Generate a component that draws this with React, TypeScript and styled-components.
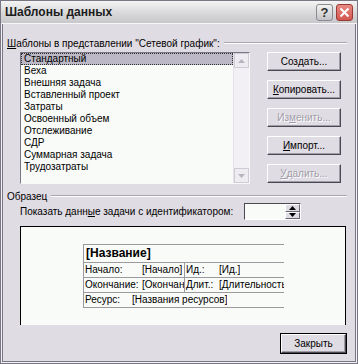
import React from "react";
import styled, { createGlobalStyle, css } from "styled-components";

const Global = createGlobalStyle`
  html, body { margin: 0; padding: 0; background: #e0dce3; }
  body { font-family: "Liberation Sans", Arial, sans-serif; font-size: 10px; color: #000; }
`;

const Window = styled.div`
  width: 358px;
  height: 364px;
  box-sizing: border-box;
  background: #e0dce3;
  border: 1px solid #7a7784;
  box-shadow: inset 0 0 0 1px #f2f0f4, inset 0 0 0 2px #7a7784;
  display: flex;
  flex-direction: column;
  overflow: hidden;
`;

const TitleBar = styled.div`
  height: 22px;
  display: flex;
  align-items: center;
  padding: 0 4px 0 4px;
  background: linear-gradient(#f4f4f4, #d6d6d8 60%, #c8c8cc);
  border-bottom: 1px solid #f6f6f6;
`;

const Title = styled.div`
  flex: 1;
  font-size: 12px;
  font-weight: bold;
  color: #1c1c1c;
`;

const CaptionButton = styled.div<{ $close?: boolean }>`
  width: 17px;
  height: 17px;
  margin-left: 3px;
  border-radius: 3px;
  box-sizing: border-box;
  display: flex;
  align-items: center;
  justify-content: center;
  font-weight: bold;
  font-size: 13px;
  ${(p) =>
    p.$close
      ? css`
          background: linear-gradient(#e88a84, #d2574f);
          border: 1px solid #9a3a36;
          color: #fff;
        `
      : css`
          background: linear-gradient(#f2f2f2, #c4c4c8);
          border: 1px solid #8a8a90;
          color: #303030;
        `}
`;

const Body = styled.div`
  flex: 1;
  display: flex;
  flex-direction: column;
  padding: 12px 10px 0 6px;
`;

const GroupHeader = styled.div<{ $gap?: number }>`
  display: flex;
  align-items: center;
  height: 14px;
  margin-top: ${(p) => p.$gap ?? 0}px;
`;

const GroupLabel = styled.span`
  padding-right: 4px;
  white-space: nowrap;
`;

const GroupLine = styled.div`
  flex: 1;
  height: 0;
  border-top: 1px solid #a8a4b0;
  border-bottom: 1px solid #ffffff;
`;

const U = styled.span`
  text-decoration: underline;
`;

const TemplatesRow = styled.div`
  display: flex;
  margin: 2px 0 0 13px;
  gap: 17px;
`;

const ListBox = styled.div`
  width: 230px;
  height: 132px;
  box-sizing: border-box;
  background: #f8fbf8;
  border: 1px solid #7a7784;
  border-right-color: #f8f8f8;
  border-bottom-color: #f8f8f8;
  display: flex;
`;

const Items = styled.div`
  flex: 1;
`;

const Item = styled.div<{ $selected?: boolean }>`
  height: 12px;
  line-height: 12px;
  padding-left: 3px;
  box-sizing: border-box;
  white-space: nowrap;
  ${(p) =>
    p.$selected &&
    css`
      background: #bcb8c6;
      outline: 1px dotted #303030;
      outline-offset: -1px;
    `}
`;

const ScrollBar = styled.div`
  width: 15px;
  display: flex;
  flex-direction: column;
  background: #f2f0f4;
  border-left: 1px solid #e4e2e8;
`;

const ScrollArrow = styled.div`
  width: 15px;
  height: 15px;
  box-sizing: border-box;
  border: 1px solid #d0ccd6;
  background: #eeecf1;
  display: flex;
  align-items: center;
  justify-content: center;
`;

const ScrollTrack = styled.div`
  flex: 1;
`;

const ButtonColumn = styled.div`
  display: flex;
  flex-direction: column;
  gap: 9px;
`;

const Button = styled.div<{ $disabled?: boolean; $default?: boolean; $w?: number }>`
  width: ${(p) => p.$w ?? 74}px;
  height: 19px;
  box-sizing: border-box;
  background: #e0dce3;
  border: 1px solid;
  border-color: #ffffff #4a4850 #4a4850 #ffffff;
  box-shadow: inset -1px -1px 0 #a09ca8;
  display: flex;
  align-items: center;
  justify-content: center;
  white-space: nowrap;
  color: ${(p) => (p.$disabled ? "#a09ca8" : "#000")};
  text-shadow: ${(p) => (p.$disabled ? "1px 1px 0 #ffffff" : "none")};
  ${(p) =>
    p.$default &&
    css`
      outline: 1px solid #000;
      outline-offset: 0;
    `}
`;

const SpinRow = styled.div`
  display: flex;
  align-items: center;
  margin-left: 13px;
  height: 17px;
`;

const SpinLabel = styled.span`
  width: 224px;
  white-space: nowrap;
`;

const SpinBox = styled.div`
  width: 57px;
  height: 17px;
  box-sizing: border-box;
  display: flex;
  background: #f8fbf8;
  border: 1px solid #4a4850;
  border-right-color: #ffffff;
  border-bottom-color: #ffffff;
`;

const SpinField = styled.div`
  flex: 1;
`;

const SpinButtons = styled.div`
  width: 15px;
  display: flex;
  flex-direction: column;
`;

const SpinBtn = styled.div`
  flex: 1;
  background: #e0dce3;
  border: 1px solid;
  border-color: #ffffff #6a6872 #6a6872 #ffffff;
  display: flex;
  align-items: center;
  justify-content: center;
`;

const Preview = styled.div`
  margin: 6px 0 0 13px;
  width: 326px;
  height: 99px;
  box-sizing: border-box;
  background: #f8fbf8;
  border: 1px solid #000;
  border-bottom: none;
  padding: 17px 0 0 62px;
`;

const Card = styled.div`
  width: 200px;
  border-left: 1px solid #9c9a9e;
  border-top: 1px solid #9c9a9e;
`;

const CardTitle = styled.div`
  height: 17px;
  line-height: 17px;
  font-size: 12px;
  font-weight: bold;
  padding-left: 2px;
  border-bottom: 1px solid #9c9a9e;
`;

const CardRow = styled.div`
  display: flex;
  height: 15px;
  border-bottom: 1px solid #9c9a9e;
  box-sizing: border-box;
`;

const Cell = styled.div<{ $w?: number; $divider?: boolean }>`
  display: flex;
  width: ${(p) => (p.$w ? `${p.$w}px` : "auto")};
  flex: ${(p) => (p.$w ? "none" : 1)};
  min-width: 0;
  overflow: hidden;
  white-space: nowrap;
  line-height: 14px;
  border-right: ${(p) => (p.$divider ? "1px solid #9c9a9e" : "none")};
`;

const CellLabel = styled.span<{ $w: number }>`
  width: ${(p) => p.$w}px;
  flex: none;
  padding-left: 1px;
  box-sizing: border-box;
`;

const CellValue = styled.span`
  overflow: hidden;
`;

const Footer = styled.div`
  display: flex;
  justify-content: flex-end;
  margin-top: 9px;
  padding-right: 1px;
`;

const Arrow: React.FC<{ down?: boolean; color?: string }> = ({ down, color = "#b8b4c0" }) => (
  <svg width="7" height="4" viewBox="0 0 7 4">
    <path d={down ? "M0 0h7L3.5 4z" : "M0 4h7L3.5 0z"} fill={color} />
  </svg>
);

const templates = [
  "Стандартный",
  "Веха",
  "Внешняя задача",
  "Вставленный проект",
  "Затраты",
  "Освоенный объем",
  "Отслеживание",
  "СДР",
  "Суммарная задача",
  "Трудозатраты",
];

export default function App() {
  return (
    <>
      <Global />
      <Window>
        <TitleBar>
          <Title>Шаблоны данных</Title>
          <CaptionButton>?</CaptionButton>
          <CaptionButton $close>
            <svg width="11" height="11" viewBox="0 0 11 11">
              <path d="M1.5 1.5l8 8M9.5 1.5l-8 8" stroke="#fff" strokeWidth="2" />
            </svg>
          </CaptionButton>
        </TitleBar>
        <Body>
          <GroupHeader>
            <GroupLabel>
              <U>Ш</U>аблоны в представлении "Сетевой график":
            </GroupLabel>
            <GroupLine />
          </GroupHeader>
          <TemplatesRow>
            <ListBox>
              <Items>
                {templates.map((t, i) => (
                  <Item key={t} $selected={i === 0}>
                    {t}
                  </Item>
                ))}
              </Items>
              <ScrollBar>
                <ScrollArrow>
                  <Arrow />
                </ScrollArrow>
                <ScrollTrack />
                <ScrollArrow>
                  <Arrow down />
                </ScrollArrow>
              </ScrollBar>
            </ListBox>
            <ButtonColumn>
              <Button>
                Соз<U>д</U>ать...
              </Button>
              <Button>
                <U>К</U>опировать...
              </Button>
              <Button $disabled>
                Из<U>м</U>енить...
              </Button>
              <Button>
                <U>И</U>мпорт...
              </Button>
              <Button $disabled>
                <U>У</U>далить...
              </Button>
            </ButtonColumn>
          </TemplatesRow>
          <GroupHeader $gap={5}>
            <GroupLabel>Образец</GroupLabel>
            <GroupLine />
          </GroupHeader>
          <SpinRow>
            <SpinLabel>
              Показать данн<U>ы</U>е задачи с идентификатором:
            </SpinLabel>
            <SpinBox>
              <SpinField />
              <SpinButtons>
                <SpinBtn>
                  <Arrow color="#000" />
                </SpinBtn>
                <SpinBtn>
                  <Arrow down color="#000" />
                </SpinBtn>
              </SpinButtons>
            </SpinBox>
          </SpinRow>
          <Preview>
            <Card>
              <CardTitle>[Название]</CardTitle>
              <CardRow>
                <Cell $w={100} $divider>
                  <CellLabel $w={58}>Начало:</CellLabel>
                  <CellValue>[Начало]</CellValue>
                </Cell>
                <Cell>
                  <CellLabel $w={34}>Ид.:</CellLabel>
                  <CellValue>[Ид.]</CellValue>
                </Cell>
              </CardRow>
              <CardRow>
                <Cell $w={100} $divider>
                  <CellLabel $w={58}>Окончание:</CellLabel>
                  <CellValue>[Окончание]</CellValue>
                </Cell>
                <Cell>
                  <CellLabel $w={34}>Длит.:</CellLabel>
                  <CellValue>[Длительность]</CellValue>
                </Cell>
              </CardRow>
              <CardRow>
                <Cell>
                  <CellLabel $w={48}>Ресурс:</CellLabel>
                  <CellValue>[Названия ресурсов]</CellValue>
                </Cell>
              </CardRow>
            </Card>
          </Preview>
          <Footer>
            <Button $default $w={65}>
              Закрыть
            </Button>
          </Footer>
        </Body>
      </Window>
    </>
  );
}
